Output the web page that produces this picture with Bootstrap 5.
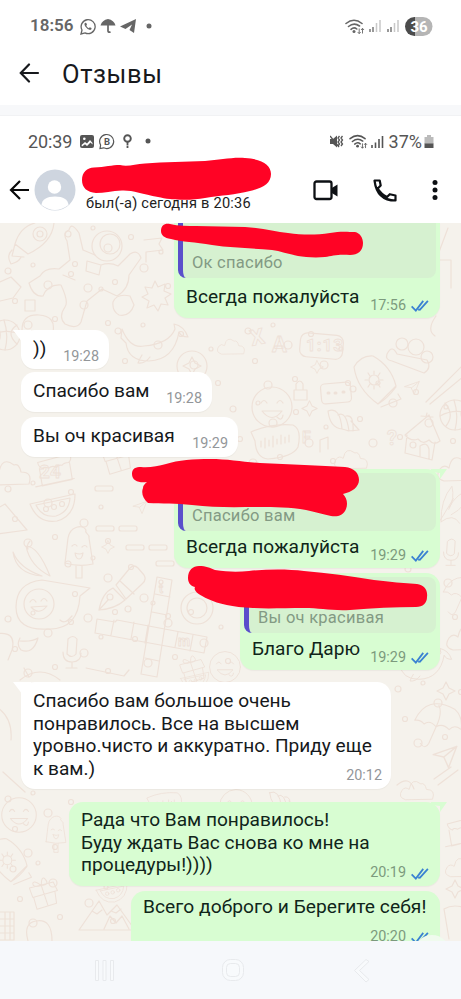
<!DOCTYPE html>
<html lang="ru">
<head>
<meta charset="utf-8">
<meta name="viewport" content="width=device-width, initial-scale=1">
<title>Отзывы</title>
<link href="https://cdn.jsdelivr.net/npm/bootstrap@5.3.0/dist/css/bootstrap.min.css" rel="stylesheet">
<style>
body{width:461px;height:999px;overflow:hidden;background:#fff;font-family:Roboto,"Noto Sans",sans-serif;color:#16191c}
svg{display:block;flex:none}
.outer-status{height:50px;padding:2px 29px 0 30px;color:#666}
.clock-a{font-size:17px;font-weight:600;letter-spacing:0;width:50px}
.title-bar{height:55px;padding-left:19px}
.title-bar h1{font-size:25.5px;font-weight:400;margin:0 0 0 22px;letter-spacing:.6px;line-height:48px;color:#17191d}
.strip{height:11px;background:#f7f8fa;border-bottom:1px solid #f1f2f4}
.inner-status{height:50px;padding:0 27px 0 28px;color:#555}
.clock-b{font-size:18px;width:51px;letter-spacing:-.1px}
.pct{font-size:18px;letter-spacing:0}
.contact{height:57px;padding:0 23px 9px 9px}
.seen{font-size:14.6px;line-height:17px;color:#222;margin:26px 0 0 10px;width:190px;letter-spacing:.22px;white-space:nowrap}
.chat{height:718px;background:#f5f2ec;overflow:hidden}
.doodles,.marker{position:absolute;left:0;top:0}
.feed{position:relative;height:100%;padding:0 21px}
.bub{position:relative;border-radius:14px;background:#fff;font-size:19.1px;line-height:22.6px;white-space:nowrap;box-shadow:0 1px 1px rgba(90,80,60,.06);flex:none}
.out{background:#d8fdd2;align-self:flex-end;color:#10251a}
.inn{align-self:flex-start}
.inn.tip::before,.out.tip::after{content:"";position:absolute;top:0;width:18px;height:15px;background:inherit}
.inn.tip::before{left:-8px;clip-path:polygon(0 0,100% 0,100% 100%,8px 100%,8px 70%)}
.out.tip::after{right:-7px;height:10px;width:16px;clip-path:polygon(100% 0,0 0,0 3px,9px 4px,9px 100%)}
.quote{background:#d6f1d0;border-left:5px solid #5a4fcb;border-radius:8px;color:#839a84;font-size:16.5px;line-height:20px;margin:4px 4px 0;padding:0 0 5px 9px;letter-spacing:.25px}
.stamp{font-size:14.4px;line-height:16px;color:#939699;letter-spacing:0}
.out .stamp{color:#7c9a7d}
.sysnav{height:58px;background:#f6f8fb}
.h1a{height:95px;width:266px;border-top-left-radius:0;border-top-right-radius:0}
.h1a .quote{height:55px;margin-top:0;border-top-left-radius:0;border-top-right-radius:0}
.h2a{height:99px;width:266px;margin-top:12px}.h2a .quote{height:58px}
.h3a{height:97px;width:200px;margin-top:5px}.h3a .quote{height:56px}
.w1{width:88px;height:39px;margin-top:12px}
.w2{width:191px;height:40px;margin-top:3px}
.w3{width:217px;height:40px;margin-top:5px}
.w4{width:370px;height:107px;margin-top:12px;padding:8px 9px 5px 12px}
.g4{width:371px;height:84px;margin-top:13px;padding:7px 10px 5px 12px}
.g5{width:309px;height:70px;margin-top:5px;padding:5px 10px 16px 12px;font-size:19.2px;letter-spacing:.05px}
.line{padding:0 10px 0 12px}
.scroll-dot{position:absolute;left:414px;top:712px;width:36px;height:36px;border-radius:50%;background:#f0fbee}
</style>
<script src="https://cdn.jsdelivr.net/npm/bootstrap@5.3.0/dist/js/bootstrap.bundle.min.js"></script>
</head>
<body>
<svg width="0" height="0" class="position-absolute" aria-hidden="true">
<defs>
<symbol id="ticks" viewBox="0 0 20 14"><path d="M1 8l4.500 4.500L13.500 2M9.500 12L18.500 2M8.300 10.800l1.300 1.400" fill="none" stroke="#3a82d2" stroke-width="1.900"/></symbol>
<symbol id="wifi" viewBox="0 0 20 16"><g fill="none" stroke="currentColor" stroke-width="1.600" stroke-linecap="round"><path d="M1 5Q9-1.500 17 5M3.500 8Q9 3.500 14.500 7.500M6 10.800Q9 8.200 11.800 10.500"/></g><circle cx="9" cy="13" r="1.500" fill="currentColor"/><path d="M14.200 10v5m-1.500-1.500l1.500 1.700 1.500-1.700M17.500 15v-5m-1.500 1.500l1.500-1.700 1.500 1.700" fill="none" stroke="currentColor" stroke-width=".9"/></symbol>
<symbol id="face" viewBox="0 0 44 44"><circle cx="22" cy="22" r="20"/><path d="M11 18q3-5 6 0M27 18q3-5 6 0M12 26q10 13 20 0zM27 32q5 5 6-2"/></symbol>
<symbol id="lolly" viewBox="0 0 34 56"><path d="M3 39L6 14C8 2 21 0 24 6c-2 4 4 3 3 8l4 26q-14 3-28-1zM14 42v12h6V42M10 22q3-3 5 0M20 23q3-3 5 0M13 29q5 2 8 0-1 6-4 6t-4-6z"/></symbol>
<symbol id="melon" viewBox="0 0 50 32"><path d="M2 12L47 2q0 22-18 27Q10 32 2 12zM8 13L42 6q-1 14-14 18-14 2-20-11z"/><circle cx="18" cy="17" r="2.500"/><circle cx="26" cy="15" r="2.500"/><circle cx="34" cy="12" r="2.500"/></symbol>
<symbol id="chick" viewBox="0 0 80 56"><path d="M4 30Q4 6 30 3l48 8-10 8q-2 34-32 33Q4 54 4 30z"/><circle cx="27" cy="27" r="15"/><path d="M18 25q3-5 6 0M29 24q3-5 6 0M19 30q8 9 16-1zM48 43q5 5 12-4M55 44l5-5"/></symbol>
<symbol id="pen" viewBox="0 0 50 48"><path d="M2 46q3-17 14-22l12 12Q18 45 2 46zM19 21L33 4q4-4 8 0l6 7q3 5-2 9L29 35zM2 46l9-10M23 17l14 13"/><circle cx="13" cy="33" r="3"/></symbol>
<symbol id="whale" viewBox="0 0 72 44"><path d="M2 6q8 20 22 17 25-2 31-17l-1-5q10 2 14 13-7 0-9-5-5 28-30 29Q8 38 6 20L1 15zM30 34q-5 7-12 6 2-5 4-8"/></symbol>
<symbol id="board" viewBox="0 0 52 58"><path d="M3 14Q10 2 22 3q18 10 23 30l-18 18Q6 36 3 14zM27 51q9-5 18-17M30 54l20-8-3-5"/><circle cx="23" cy="27" r="5"/><path d="M23 18v3M23 33v3M14 27h3M29 27h3M17 20l2 3M29 20l-2 3M17 34l2-3M29 34l-2-3"/></symbol>
<symbol id="house" viewBox="0 0 40 50"><path d="M2 23L26 3l11 26q-6 5-11-1-6 5-11-1-7 3-13-4zM4 23L2 41l27 7 3-18M17 44V34q7-5 9 3v10M23 5l1-4M18 4l12 1"/><circle cx="10" cy="33" r="3"/></symbol>
<symbol id="shell" viewBox="0 0 36 26"><path d="M2 3q12-5 14 18Q4 20 2 3zM12 7q8-5 11 16-3-1-7-2M20 8q8-2 7 15M25 13l8 9-11 1"/></symbol>
<symbol id="ball" viewBox="0 0 34 34"><circle cx="17" cy="17" r="15"/><path d="M2 18q15-8 30-2M16 2q5 15 1 30M7 5q10 12 1 23M29 7q-12 8 0 19"/></symbol>
<symbol id="mount" viewBox="0 0 58 34"><path d="M1 32L21 3l8 14 10-10 18 25zM14 13l5 3 5-4M33 13l5 2 5-4M26 31l6-13 6 7 6-7 7 13"/></symbol>
<symbol id="cake" viewBox="0 0 48 42"><path d="M6 13l34-9q3 6-1 9-5 0-7 3-4-1-6 2-5-2-8 1-5-2-6 1-5-2-6-7zM8 20l3 18 32-7-3-18M4 39l41-9"/></symbol>
<symbol id="mic" viewBox="0 0 24 36"><path d="M8 5q5-5 9 0l-1 15q-4 5-9 0zM3 18q0 10 9 10t9-9M12 28v5M6 34h11"/></symbol>
<symbol id="cloud" viewBox="0 0 46 28"><path d="M8 25Q-2 22 4 13q4-5 9-1 3-16 15-7 5-2 7 7 12 0 8 12z"/></symbol>
<symbol id="plane" viewBox="0 0 24 22"><path d="M2 9L22 2l-7 18-4-9zM11 11l11-9"/></symbol>
<symbol id="spark" viewBox="0 0 20 20"><path d="M10 1l3 6 6 3-6 3-3 6-3-6-6-3 6-3z"/></symbol>
<symbol id="leaf" viewBox="0 0 44 54"><path d="M4 50Q3 22 18 4q4 16-4 30M14 32Q25 12 40 10q-2 20-23 31M4 50q16-12 24 2M3 48l17-28"/></symbol>
<symbol id="umbr" viewBox="0 0 56 56"><path d="M3 24Q16-4 46 12q9 8 7 22-7-6-13 0-7-7-14-3-7-8-13-3-4-5-10-4zM29 8q4 8-3 23l-8 18q-4 7-9 0"/></symbol>
<symbol id="gift" viewBox="0 0 40 40"><path d="M4 13l28-7 5 10-29 8zM9 24l4 14 23-7-2-14M18 10l8 24M18 10Q8 3 8 8t10 2Q18-3 23 3t-5 7"/></symbol>
<symbol id="chat" viewBox="0 0 56 42"><path d="M3 11q20-9 42-7 9 4 5 22-5 10-30 12Q8 37 7 20zM13 20v6M17 17v10M21 19v6M25 15v11M29 18v5M33 14v9M37 16v6M41 14v7"/></symbol>
<symbol id="pins" viewBox="0 0 60 40"><path d="M3 18q5-10 10 0l30 6q5 8-3 13L8 25q-7-1-5-7z"/><circle cx="18" cy="8" r="6"/><circle cx="32" cy="11" r="8"/><circle cx="43" cy="21" r="6"/></symbol>
<g id="bits"><circle cx="8" cy="9" r="3"/><circle cx="33" cy="3" r="2"/><circle cx="48" cy="23" r="4"/><circle cx="15" cy="39" r="2.500"/><circle cx="71" cy="12" r="2.500"/><circle cx="84" cy="43" r="4"/><circle cx="55" cy="57" r="2.500"/><circle cx="101" cy="27" r="2"/><circle cx="28" cy="63" r="4"/><circle cx="108" cy="61" r="2.500"/></g>
</defs>
</svg>

<div class="outer-status d-flex align-items-center">
  <span class="clock-a">18:56</span>
  <svg width="16" height="17" viewBox="0 0 16 17" fill="none" stroke="currentColor" stroke-width="1.300"><path d="M1 16l1-4a7 7 0 1 1 3 2.900z"/><path d="M5.300 4.800q-1.700 1 0 3.700 2.500 3.500 4.800 3.500 2-.4 1.400-2l-1.700-.8-1 1q-2.200-1-2.500-2.800l.7-.7-.7-1.700z" fill="currentColor" stroke="none"/></svg>
  <svg class="ms-1 me-1" width="16" height="16" viewBox="0 0 16 16"><path d="M.5 7.500Q2 2 8 1q6 1 7.500 6.500z" fill="currentColor"/><path d="M8 6v7q.4 2 2.500.7" fill="none" stroke="currentColor" stroke-width="1.700"/></svg>
  <svg width="17" height="16" viewBox="0 0 17 16" fill="currentColor"><path d="M0 8.500L16 1l-2 14-4.500-3L12 6.500 5.500 11z"/></svg>
  <svg style="margin-left:9px" width="6" height="6"><circle cx="3" cy="3" r="2.500" fill="currentColor"/></svg>
  <svg class="ms-auto" width="20" height="17"><use href="#wifi"/></svg>
  <svg width="32" height="14" viewBox="0 0 32 14" stroke-width="1.500" fill="none" class="ms-1"><path d="M1 13v-3M4 13V8M19 13v-3M22 13V8" stroke="#777"/><path d="M7.500 13V4M11 13V1M25.500 13V4M29 13V1" stroke="#c8c8c8"/></svg>
  <svg width="28" height="19" viewBox="0 0 28 19" style="margin-left:4px;margin-right:-1px"><path d="M9.500 0H18a9.500 9.500 0 0 1 0 19H9.500z" fill="#b5b5b5"/><path d="M10 0h-.5a9.500 9.500 0 0 0 0 19h.5z" fill="#4c4c4c"/><text x="14" y="14.500" text-anchor="middle" font-size="15" font-weight="700" fill="#fff">36</text></svg>
</div>

<header class="title-bar d-flex align-items-start">
  <svg width="21" height="20" viewBox="0 0 21 20" style="margin-top:13px" fill="none" stroke="#17191d" stroke-width="2.200" stroke-linecap="round"><path d="M10 1.500L1.800 10l8.200 8.500M2 10h17"/></svg>
  <h1>Отзывы</h1>
</header>
<div class="strip"></div>

<div class="inner-status d-flex align-items-center">
  <span class="clock-b">20:39</span>
  <svg width="14" height="13" viewBox="0 0 14 13" style="margin-left:1px"><rect width="14" height="13" rx="2" fill="currentColor"/><path d="M1.500 10l3.500-3 2 1.500L10 5l2.500 3v1.500l-2-2L7 11 5 9.200 2 11.500z" fill="#fff"/><circle cx="4.300" cy="3.800" r="1.300" fill="#fff"/></svg>
  <svg style="margin-left:5px" width="16" height="17" viewBox="0 0 16 17"><path d="M1 15.500l.6-3.500a7 7 0 1 1 3 2.800z" fill="none" stroke="currentColor" stroke-width="1.200"/><text x="8" y="12" font-size="9.500" font-weight="700" text-anchor="middle" fill="currentColor">B</text></svg>
  <svg style="margin-left:8px" width="9" height="14" viewBox="0 0 9 14" fill="none" stroke="currentColor"><circle cx="4.500" cy="4.500" r="3.300" stroke-width="1.900"/><path d="M4.500 8v3.500M4.500 12v2" stroke-width="1.800"/></svg>
  <svg style="margin-left:13px" width="6" height="6"><circle cx="3" cy="3" r="2.500" fill="currentColor"/></svg>
  <svg class="ms-auto" width="14" height="13" viewBox="0 0 14 13"><path d="M0 4h3l4-3.500v12L3 9H0z" fill="currentColor"/><path d="M0 1l9 11M9.500 1l-1.500 2 1.500 2-1.500 2 1.500 2-1.500 2M12.500 1l-1.500 2 1.500 2-1.500 2 1.500 2-1.500 2" fill="none" stroke="currentColor" stroke-width="1.300"/></svg>
  <svg style="margin-left:5px" width="19" height="15"><use href="#wifi"/></svg>
  <svg style="margin-left:3px" width="13" height="13" stroke="currentColor" stroke-width="1.600"><path d="M1 13v-3M4.500 13V7.500M8 13V4M11.500 13V1"/></svg>
  <span class="pct" style="margin-left:5px">37%</span>
  <svg style="margin-left:2px" width="10" height="13" viewBox="0 0 10 13"><path d="M3 0h4v2h2.500v7H.5V2H3z" fill="#bbb"/><path d="M.5 8.500h9V13h-9z" fill="#555"/></svg>
</div>
<div class="contact d-flex align-items-center">
  <svg width="21" height="20" viewBox="0 0 21 20" fill="none" stroke="#090909" stroke-width="2.200"><path d="M11 1L2 10l9 9M2 10h18"/></svg>
  <svg style="margin-left:4px" width="42" height="42" viewBox="0 0 42 42"><circle cx="21" cy="21" r="20.500" fill="#ced5df"/><circle cx="20.500" cy="18" r="6.700" fill="#fff"/><path d="M7.500 36q1-8.500 13.500-8.500T34.500 36Q21 46 7.500 36z" fill="#fff"/></svg>
  <div class="seen">был(-а) сегодня в 20:36</div>
  <svg class="ms-auto" width="26" height="21" viewBox="0 0 26 21"><rect x="1.500" y="1.500" width="17" height="17.500" rx="2" fill="none" stroke="#0d1014" stroke-width="2.300"/><path d="M18 8.500l6.500-4v12l-6.500-4z" fill="#0d1014"/></svg>
  <svg style="margin-left:34px" width="24" height="23" viewBox="0 0 24 23" fill="none" stroke="#0d1014" stroke-width="2.200" stroke-linejoin="round"><path d="M1.500 1.500h5.200l1 5-3 3Q8 15 14 18l2.800-2.800 5.700 1.300v5Q4 21.500 1.500 1.500z"/></svg>
  <svg style="margin-left:35px" width="6" height="20" fill="#0d1014"><circle cx="3" cy="2.500" r="2.500"/><circle cx="3" cy="10" r="2.500"/><circle cx="3" cy="17.500" r="2.500"/></svg>
</div>

<main class="chat position-relative">
  <svg class="doodles" width="461" height="718" viewBox="0 223 461 718" fill="none" stroke="#eee1d8" stroke-width="1.200" stroke-linecap="round" stroke-linejoin="round">
    <g><use href="#bits" x="0" y="262"/><use href="#bits" x="110" y="322"/><use href="#bits" x="0" y="480"/><use href="#bits" x="60" y="555"/><use href="#bits" x="0" y="610"/><use href="#bits" x="240" y="322"/><use href="#bits" x="345" y="380"/><use href="#bits" x="225" y="400"/><use href="#bits" x="390" y="680"/><use href="#bits" x="400" y="560"/><use href="#bits" x="120" y="600"/><use href="#bits" x="0" y="790"/><use href="#bits" x="5" y="860"/><use href="#bits" x="60" y="225"/></g>
    <!-- rocket and astronaut -->
    <path d="M54 223q-2 20-26 31l-13-10q5-17 20-21M15 244l-3 12 12 1M12 250q-6 6-1 14 8-2 10-7"/><circle cx="40" cy="234" r="7"/><circle cx="40" cy="234" r="3"/>
    <circle cx="107" cy="246" r="15"/><circle cx="110" cy="244" r="10"/><path d="M95 255l-12-5-4-17q-8-12-10-3-7 3-2 11l3 19-11 9q-14-2-19 7l-11 7q4 14 14 13 5-12 18-11 8 17 4 22-7 10 0 17 12 6 16-2l6-21 15-12 15 7q12-7 12-21l12-17q-3-9-11-4l-12 12q-8-4-17-1M87 261l14 4-2 10-13-4zM63 275l12 5M144 240l18-2-3 6 4 6-17 2v10"/>
    <path d="M155 281l3 6 7-3-1 7 7 3-6 4 3 7-7-1-3 7-4-6-7 3 2-7-7-4 6-3-3-7 7 1zM0 282l11-5 10 10-8 11-13 3M25 300h10v11h-10zM113 302q4-9 17-6l4 9q-4 12-15 10-7-4-6-13M22 330q0-16 17-15t14 17"/>
    <use href="#ball" x="-12" y="318" width="34" height="34"/><use href="#whale" x="120" y="323" width="72" height="44"/><circle cx="192" cy="366" r="15"/><use href="#spark" x="182" y="356" width="20" height="20"/><use href="#cloud" x="216" y="338" width="30" height="18"/>
    <g font-size="22" font-weight="700" stroke-width=".8"><text x="252" y="346" transform="rotate(-12 252 346)">X</text><text x="272" y="352">A</text><text x="39" y="478" font-size="19">24</text><text x="306" y="351" font-size="17" letter-spacing="1">1:13</text><text x="159" y="593" font-size="12">t</text><text x="178" y="646" font-size="14">m</text><text x="302" y="443" font-size="16">F</text><text x="387" y="445" font-size="20">?</text></g>
    <rect x="300" y="334" width="43" height="24" rx="7" transform="rotate(5 321 346)"/><rect x="321" y="383" width="30" height="20" rx="4" transform="rotate(-5 336 393)"/><path d="M328 393h1M335 393h1M343 392h1" stroke-width="3"/>
    <use href="#board" x="351" y="353" width="52" height="58"/><use href="#pins" x="384" y="336" width="60" height="40"/><use href="#face" x="250" y="385" width="44" height="44"/><use href="#chat" x="248" y="421" width="56" height="42"/><use href="#shell" x="326" y="408" width="36" height="26"/><use href="#house" x="403" y="412" width="40" height="50"/><use href="#ball" x="438" y="398" width="34" height="34"/><use href="#spark" x="310" y="360" width="14" height="14"/><use href="#spark" x="301" y="400" width="17" height="17"/><use href="#plane" x="403" y="380" width="18" height="16"/>
    <path d="M296 390v-6q4-6 7 0v6M294 390h13v10h-13zM320 440v12M320 440l8-3v12M426 402l36-36M430 404l34-28M448 228l-12 32h15v28M436 316q-10 14-1 20"/><use href="#cloud" x="333" y="448" width="36" height="24"/><use href="#cloud" x="436" y="456" width="46" height="28"/>
    <use href="#cake" x="32" y="448" width="45" height="44"/><use href="#cloud" x="-14" y="454" width="46" height="40"/><use href="#melon" x="28" y="492" width="50" height="32"/><use href="#gift" x="98" y="440" width="36" height="36"/><use href="#lolly" x="62" y="524" width="34" height="56"/><path d="M-2 508l7-4 22 26-29 4M13 552q6 16 29 24-26-2-29-24zM26 546q12 0 24 30-20-10-24-30M30 541q-4 4-2 8"/>
    <use href="#chick" x="12" y="577" width="80" height="56"/><use href="#pen" x="97" y="564" width="50" height="48"/><use href="#spark" x="101" y="540" width="14" height="14"/><use href="#mic" x="60" y="634" width="24" height="36"/><path d="M20 641q12 1 18-3-5 17-17 12-5-5-1-12M-5 634q22-4 17 16l-4 10M20 680q20-16 40 0M86 668l38 8 5-6"/>
    <g><rect x="95" y="486" width="18" height="5" rx="2"/><rect x="96" y="526" width="18" height="5" rx="2"/><rect x="119" y="526" width="18" height="5" rx="2"/><rect x="126" y="545" width="18" height="5" rx="2"/><rect x="149" y="545" width="18" height="5" rx="2"/><rect x="156" y="561" width="18" height="5" rx="2"/></g><use href="#plane" x="131" y="500" width="18" height="15"/>
    <path d="M157 577l15 3-15 97-16-3zM155 594l15 3M152 612l15 3M117 620l90 17-3 16-109-20 2-14 18 3zM134 622l-3 17M148 625l-3 18M178 632l-3 15M193 635l-3 16M114 620l-3 15M145 658l14 3"/>
    <circle cx="197" cy="608" r="16"/><circle cx="197" cy="608" r="10"/><use href="#gift" x="175" y="655" width="34" height="30"/><use href="#face" x="205" y="650" width="40" height="34"/>
    <use href="#leaf" x="438" y="480" width="34" height="48"/><use href="#mic" x="441" y="535" width="20" height="34"/><use href="#umbr" x="441" y="570" width="45" height="50"/><use href="#cloud" x="445" y="625" width="46" height="28"/><use href="#whale" x="395" y="646" width="60" height="40"/><use href="#spark" x="436" y="677" width="20" height="28"/><use href="#umbr" x="410" y="698" width="56" height="52"/><use href="#plane" x="430" y="744" width="30" height="26"/><path d="M434 779l17-12M438 785l20-15M397 785q12-10 17 4M-7 705q20 10 18 35M3 772l22 20M24 668l5 9"/>
    <use href="#cloud" x="395" y="780" width="44" height="22"/><use href="#cake" x="442" y="812" width="42" height="38"/><use href="#cloud" x="444" y="857" width="36" height="22"/><use href="#spark" x="445" y="879" width="20" height="20"/><path d="M444 909q10-6 24 0l-2 32M444 909l5 30"/>
    <use href="#lolly" x="44" y="810" width="24" height="48"/><use href="#face" x="0" y="796" width="38" height="38"/><use href="#board" x="-16" y="836" width="52" height="52"/><use href="#gift" x="26" y="877" width="34" height="34"/><use href="#mount" x="78" y="898" width="58" height="34"/><use href="#melon" x="92" y="882" width="40" height="22"/><path d="M0 912h14v28H0M0 919h14M0 926h14M0 933h14M5 912v28M10 912v28M28 941q-5-18 8-20 16-3 16 20"/><use href="#chat" x="140" y="790" width="50" height="30"/><use href="#face" x="218" y="788" width="36" height="36"/><use href="#shell" x="268" y="790" width="30" height="22"/><use href="#melon" x="175" y="671" width="40" height="20"/>
  </svg>

  <div class="feed d-flex flex-column">
    <div class="bub out h1a d-flex flex-column"><div class="quote d-flex align-items-end">Ок спасибо</div>
      <div class="line d-flex align-items-end justify-content-between" style="margin-top:8px"><span>Всегда пожалуйста</span><span class="stamp d-flex align-items-center gap-1" style="margin-bottom:-5px">17:56<svg width="20" height="13"><use href="#ticks"/></svg></span></div></div>
    <div class="bub inn tip w1 line d-flex align-items-center justify-content-between"><span>))</span><span class="stamp" style="margin-top:14px">19:28</span></div>
    <div class="bub inn w2 line d-flex align-items-center justify-content-between"><span style="margin-top:-1px">Спасибо вам</span><span class="stamp" style="margin-top:13px">19:28</span></div>
    <div class="bub inn w3 line d-flex align-items-center justify-content-between"><span style="margin-top:-1px">Вы оч красивая</span><span class="stamp" style="margin-top:13px">19:29</span></div>
    <div class="bub out tip h2a d-flex flex-column"><div class="quote d-flex align-items-end">Спасибо вам</div>
      <div class="line d-flex align-items-end justify-content-between" style="margin-top:5px"><span>Всегда пожалуйста</span><span class="stamp d-flex align-items-center gap-1" style="margin-bottom:-5px">19:29<svg width="20" height="13"><use href="#ticks"/></svg></span></div></div>
    <div class="bub out h3a d-flex flex-column"><div class="quote d-flex align-items-end">Вы оч красивая</div>
      <div class="line d-flex align-items-end justify-content-between" style="margin-top:5px"><span>Благо Дарю</span><span class="stamp d-flex align-items-center gap-1" style="margin-bottom:-5px">19:29<svg width="20" height="13"><use href="#ticks"/></svg></span></div></div>
    <div class="bub inn tip w4 d-flex justify-content-between"><div>Спасибо вам большое очень<br>понравилось. Все на высшем<br>уровно.чисто и аккуратно. Приду еще<br>к вам.)</div><span class="stamp align-self-end" style="margin-left:-60px">20:12</span></div>
    <div class="bub out tip g4 d-flex justify-content-between"><div>Рада что Вам понравилось!<br>Буду ждать Вас снова ко мне на<br>процедуры!))))</div><span class="stamp align-self-end d-flex align-items-center gap-1" style="margin-left:-60px">20:19<svg width="20" height="13"><use href="#ticks"/></svg></span></div>
    <div class="bub out g5 d-flex justify-content-between"><div>Всего доброго и Берегите себя!</div><span class="stamp align-self-end d-flex align-items-center gap-1" style="margin-left:-60px">20:20<svg width="20" height="13"><use href="#ticks"/></svg></span></div>
  </div>
  <div class="scroll-dot"></div>
</main>

<footer class="sysnav">
  <svg width="461" height="58" fill="#f8fafc" stroke="#e8eaed" stroke-width="1"><path d="M95.500 19.500h3v20h-3zM103 19.500h3v20h-3zM110.500 19.500h3v20h-3z"/><rect x="222.500" y="18.500" width="21" height="21" rx="8"/><rect x="226.500" y="22.500" width="13" height="13" rx="4"/><path d="M366 18.500l3 2-9.500 9 9.500 9-3 2.500-11.500-11.500z"/></svg>
</footer>

<!-- red marker strokes over the names -->
<svg class="marker" width="461" height="999" fill="#ff0325">
  <path d="M82 180C82 172 87 168 94 167.500C105 167 112 165 120 165C128 167 135 164 145 163.500C165 162 185 162 205 161C220 160 232 157 245 158C262 159 271 165 271 174C271 184 262 188 250 191C235 195 222 195 205 198C190 201 170 200 158 197C142 194 132 190 122 190.500C112 191 104 193 96 193C87 192 82 188 82 180z"/>
  <path d="M161 231C161 225 165 223 170 224C178 226 188 226 196 226L245 227C262 228 275 232 288 233C303 235 316 235 330 233C340 231 349 232 355 232C360 233 363 238 363 243C363 251 358 255 350 255C338 254 332 256 325 257C314 258 305 257 298 256C288 254 280 251 272 250C250 248 232 248 212 245C195 242 182 242 171 239C164 238 161 235 161 231z"/>
  <path d="M132 474C132 468 136 467 141 467C149 468 158 466 166 464C178 460 194 459 210 459C228 459 244 462 260 463C290 464 320 466 345 467C354 468 359 473 359 480C359 487 352 492 343 494C347 498 348 504 346 509C343 516 337 517 331 516C322 514 315 512 306 510C290 507 274 507 260 507C240 507 215 508 192 505C176 503 162 504 148 503C143 499 141 493 143 488C143 485 145 484 147 482C139 483 132 481 132 474z"/>
  <path d="M188 578C188 570 193 566 199 566C206 566 210 568 215 570C228 572 238 572 249 571C268 569 288 569 304 571C328 573 350 576 374 580C390 582 404 583 417 584C424 585 428 590 427 597C427 603 423 607 416 607C395 607 373 608 350 610C332 611 320 608 304 608C285 608 268 609 253 608C232 607 219 604 208 599C199 595 193 591 195 587C190 586 188 582 188 578z"/>
</svg>
</body>
</html>
